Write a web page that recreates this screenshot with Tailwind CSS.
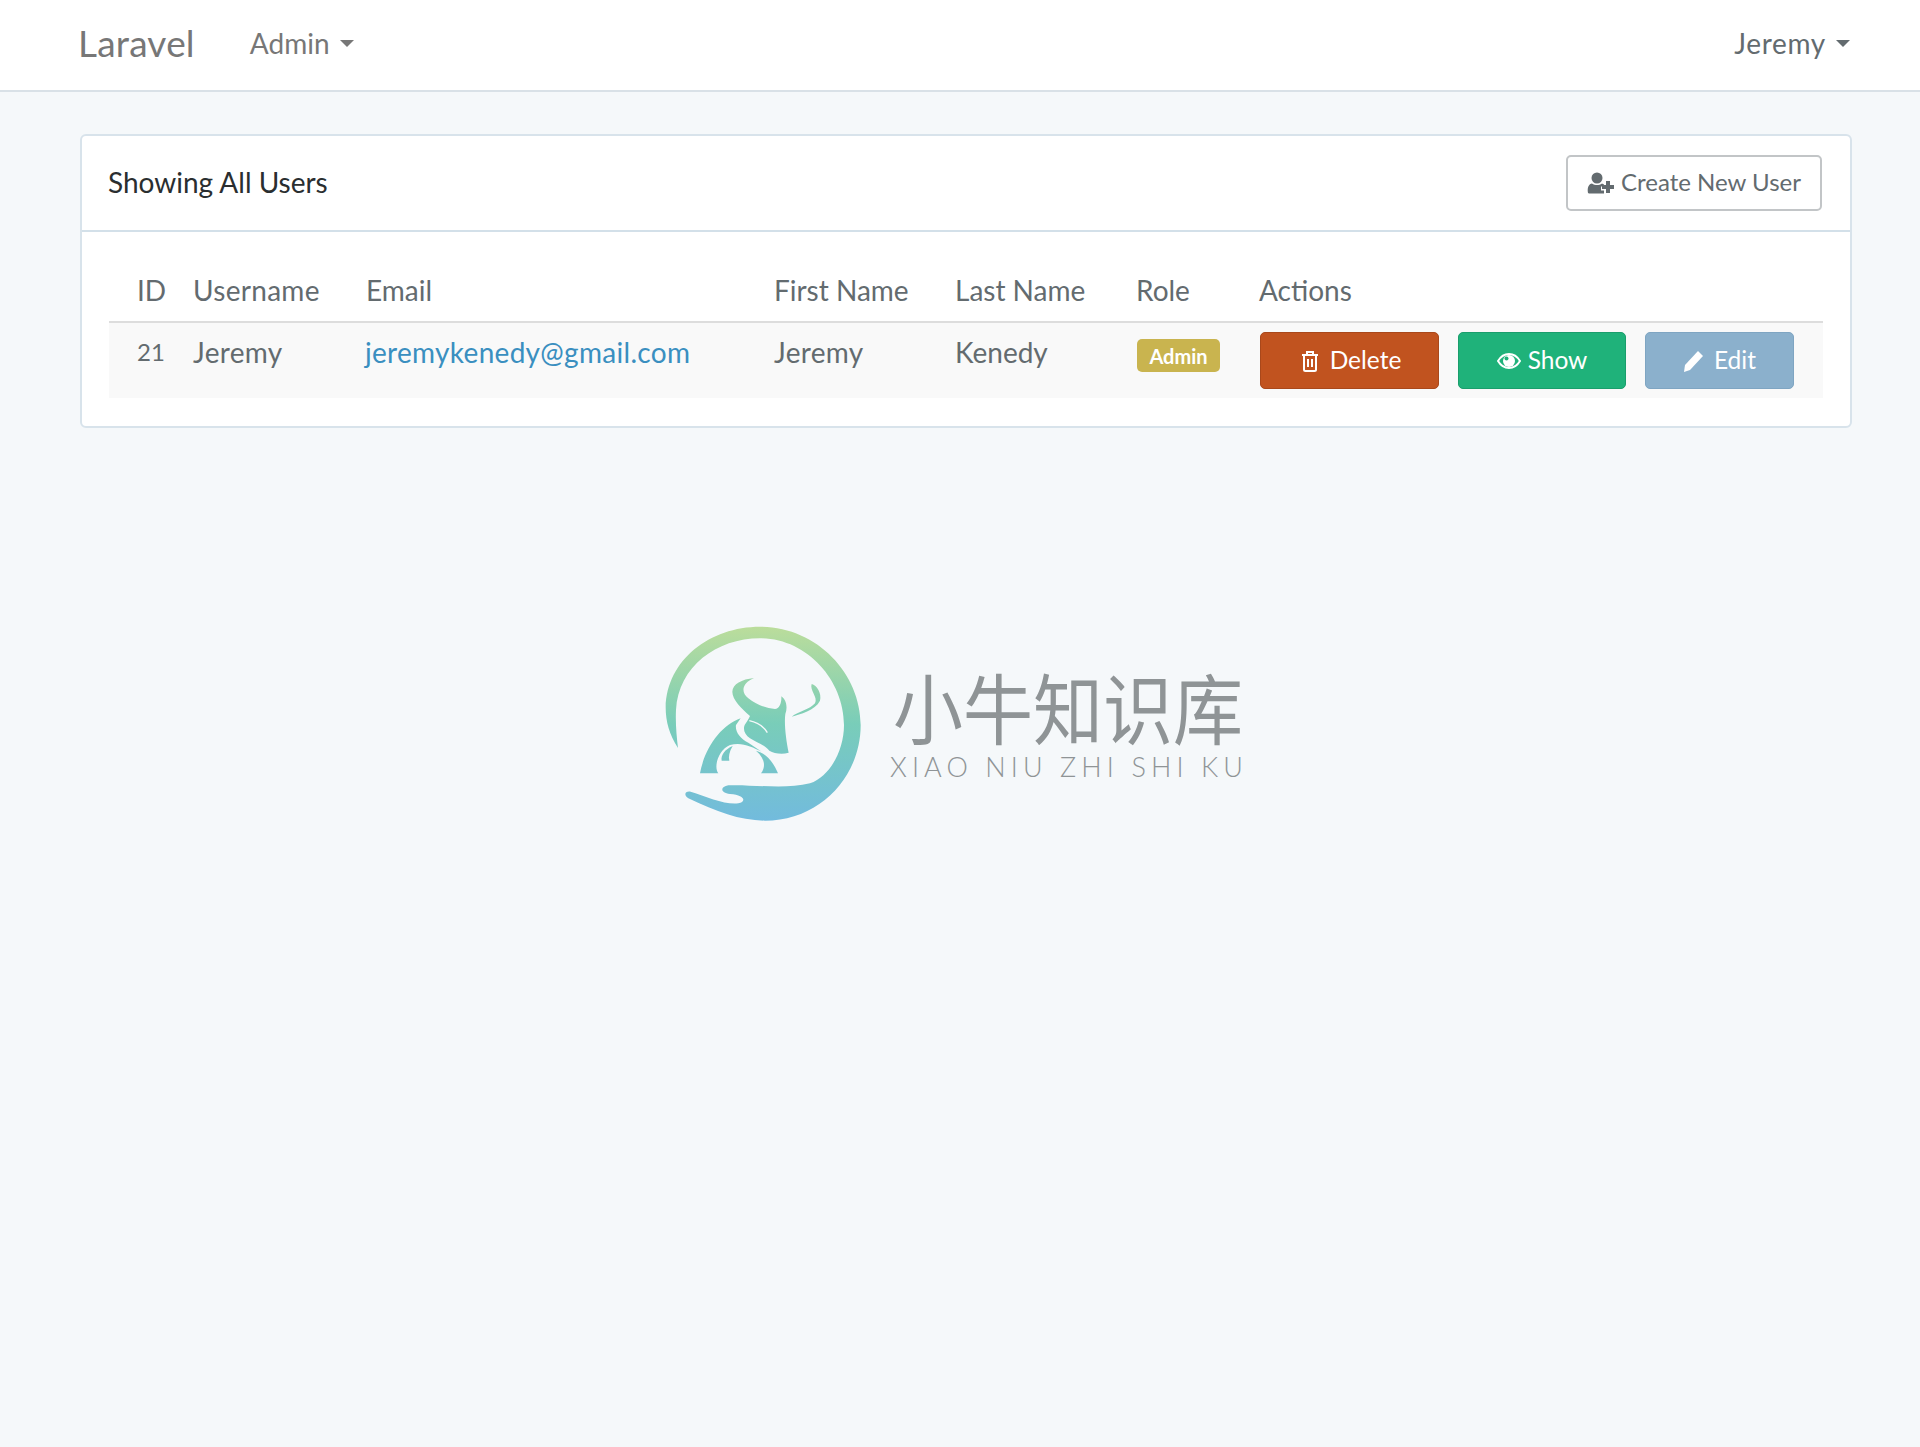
<!DOCTYPE html>
<html lang="en">
<head>
<meta charset="utf-8">
<title>Users</title>
<script src="https://cdn.jsdelivr.net/npm/@tailwindcss/browser@4"></script>
</head>
<body class="relative min-h-[1447px] bg-[#f5f8fa] font-['Lato','Liberation_Sans',sans-serif] text-[28px] text-[#636b6f]">
<nav class="flex h-[92px] items-center justify-between border-b-2 border-[#d9e1e7] bg-white pb-[5px] pl-[78px] pr-[70px]">
  <div class="flex items-center">
    <a class="text-[37px] tracking-[0.2px] text-[#777]">Laravel</a>
    <a class="ml-[55px] flex items-center text-[#777]">Admin<span class="ml-[10px] mt-[2px] h-0 w-0 border-x-[7.5px] border-t-[7px] border-x-transparent border-t-[#777]"></span></a>
  </div>
  <a class="flex items-center tracking-[0.7px]">Jeremy<span class="ml-[10px] mt-[2px] h-0 w-0 border-x-[7.5px] border-t-[7px] border-x-transparent border-t-[#636b6f]"></span></a>
</nav>

<main class="px-[80px] pr-[68px] pt-[42px]">
  <section class="rounded-[6px] border-2 border-[#d8e3eb] bg-white">
    <header class="flex h-[96px] items-center justify-between border-b-2 border-[#d3e0e9] pl-[26px] pr-[28px]">
      <h1 class="pb-[2px] text-[28px] font-normal text-[#2a2e30]">Showing All Users</h1>
      <a class="flex h-[56px] w-[256px] items-center justify-center gap-[7px] rounded-[5px] border-2 border-[#c2c5c7] bg-white text-[24px]">
        <svg width="27" height="22" viewBox="0 0 27 22" fill="#636b6f"><circle cx="10" cy="6" r="5.5"/><path d="M1 21c-1-6 1-9 4-9.500 3 2 7 2 10 0l2 1v2h-3v4h3v3H2z"/><path d="M19 9h4v4h4v4h-4v4h-4v-4h-4v-4h4z"/></svg>
        <span class="pb-[2px]">Create New User</span>
      </a>
    </header>
    <div class="px-[27px] pb-[28px] pt-[28px]">
      <table class="w-full table-fixed border-collapse text-left">
        <colgroup><col class="w-[56px]"><col class="w-[174px]"><col class="w-[407px]"><col class="w-[181px]"><col class="w-[182px]"><col class="w-[122px]"><col></colgroup>
        <thead>
          <tr class="h-[62px] border-b-2 border-[#dddddd]">
            <th class="pb-[2px] pl-[28px] font-normal">ID</th>
            <th class="pb-[2px] pl-[28px] font-normal tracking-[0.3px]">Username</th>
            <th class="pb-[2px] pl-[27px] font-normal">Email</th>
            <th class="pb-[2px] pl-[28px] font-normal">First Name</th>
            <th class="pb-[2px] pl-[28px] font-normal">Last Name</th>
            <th class="pb-[2px] pl-[27px] font-normal">Role</th>
            <th class="pb-[2px] pl-[28px] font-normal">Actions</th>
          </tr>
        </thead>
        <tbody>
          <tr class="bg-[#f9f9f9] align-top">
            <td class="pl-[28px] pt-[8px] text-[24px] leading-[42px]">21</td>
            <td class="pl-[28px] pt-[8px] leading-[42px] tracking-[0.3px]">Jeremy</td>
            <td class="pl-[26px] pt-[8px] leading-[42px]"><a class="tracking-[0.3px] text-[#3a8fc0]">jeremykenedy@gmail.com</a></td>
            <td class="pl-[28px] pt-[8px] leading-[42px] tracking-[0.3px]">Jeremy</td>
            <td class="pl-[28px] pt-[8px] leading-[42px]">Kenedy</td>
            <td class="pl-[28px] pt-[16px]"><span class="flex h-[33px] w-[83px] items-center justify-center rounded-[5px] bg-[#c9b44f] text-[20px] font-bold text-white">Admin</span></td>
            <td class="pb-[9px] pl-[29px] pt-[9px]">
              <div class="flex gap-[19px] text-[24.5px] text-white">
                <a class="flex h-[57px] w-[179px] items-center justify-center gap-[11px] rounded-[5px] border border-[#a9481b] bg-[#c1531f] pl-[3px]">
                  <svg width="18" height="22" viewBox="0 0 18 22" fill="none" stroke="#fff" stroke-width="2"><path d="M1 5h16M6 5V2h6v3M3 5v14.500q0 1.500 1.500 1.500h9q1.500 0 1.500-1.500V5M7 9v8M11 9v8"/></svg>
                  <span>Delete</span>
                </a>
                <a class="flex h-[57px] w-[168px] items-center justify-center gap-[7px] rounded-[5px] border border-[#1a9e6c] bg-[#1fb27a]">
                  <svg width="24" height="18" viewBox="0 0 24 18"><path d="M1 9C4 4 8 2 12 2s8 2 11 7c-3 5-7 7-11 7S4 14 1 9z" fill="none" stroke="#fff" stroke-width="2"/><circle cx="12" cy="9" r="6" fill="#fff"/><circle cx="9.500" cy="6.500" r="2" fill="#1fb27a"/></svg>
                  <span>Show</span>
                </a>
                <a class="flex h-[57px] w-[149px] items-center justify-center gap-[10px] rounded-[5px] border border-[#7fa5c2] bg-[#8bb0cc]">
                  <svg width="21" height="22" viewBox="0 0 21 22" fill="#fff"><path d="M15 1l5 5L7 20l-6 2 1-7z"/></svg>
                  <span>Edit</span>
                </a>
              </div>
            </td>
          </tr>
        </tbody>
      </table>
    </div>
  </section>
</main>

<div class="absolute left-[650px] top-[610px] flex">
  <svg width="240" height="220" viewBox="0 0 720 660">
    <defs><linearGradient id="g" gradientUnits="userSpaceOnUse" x1="0" y1="50" x2="0" y2="632"><stop offset="0" stop-color="#bbdd9b"/><stop offset="0.5" stop-color="#79cdb9"/><stop offset="1" stop-color="#72bbdd"/></linearGradient></defs>
    <g fill="url(#g)">
      <path d="M84 414C58 375 47 335 47 292C50 150 180 50 330 50C500 50 632 190 632 345C632 500 510 632 345 632C270 632 200 605 115 565C100 555 105 542 122 545C170 560 225 585 265 580C290 575 285 555 240 552C210 548 210 530 235 526C300 522 400 540 480 520C540 500 582 420 582 345C582 210 470 85 330 85C200 85 85 170 78 300C76 340 80 380 84 414Z"/>
      <path d="M312 204C278 218 270 245 295 265C320 285 350 295 375 297C388 295 395 280 394 259C408 268 414 290 406 312C402 340 408 390 416 428C395 434 372 430 358 422C345 405 320 398 300 385C285 375 278 360 284 345C290 335 296 328 300 318C275 295 247 270 247 245C248 222 275 208 312 204Z"/>
      <path d="M272 325C215 345 165 410 150 490L205 490C190 470 205 420 240 405C275 395 305 410 335 425L295 398C270 385 255 365 258 345Z"/>
      <path d="M248 408C225 418 212 435 215 452L238 452C235 440 238 425 248 408Z"/>
      <path d="M318 422C350 430 372 460 384 490L333 490C348 470 345 445 318 422Z"/>
      <path d="M485 222C478 240 505 262 495 280C480 298 445 305 425 320C450 312 495 302 510 272C516 250 500 225 485 222Z"/>
    </g>
    <path d="M298 332C318 336 340 348 352 368" fill="none" stroke="#f5f8fa" stroke-width="4"/>
  </svg>
  <div class="ml-[2px] mt-[52px] flex flex-col">
    <div class="ml-[1px] origin-center scale-y-[1.1] font-['Noto_Sans_CJK_SC',sans-serif] text-[70px] font-normal leading-[88px] text-[#8f9496]">小牛知识库</div>
    <div class="ml-[-2px] mt-[2px] whitespace-nowrap text-[27px] font-light leading-[30px] tracking-[5.1px] text-[#8f9496]">XIAO NIU ZHI SHI KU</div>
  </div>
</div>
</body>
</html>
